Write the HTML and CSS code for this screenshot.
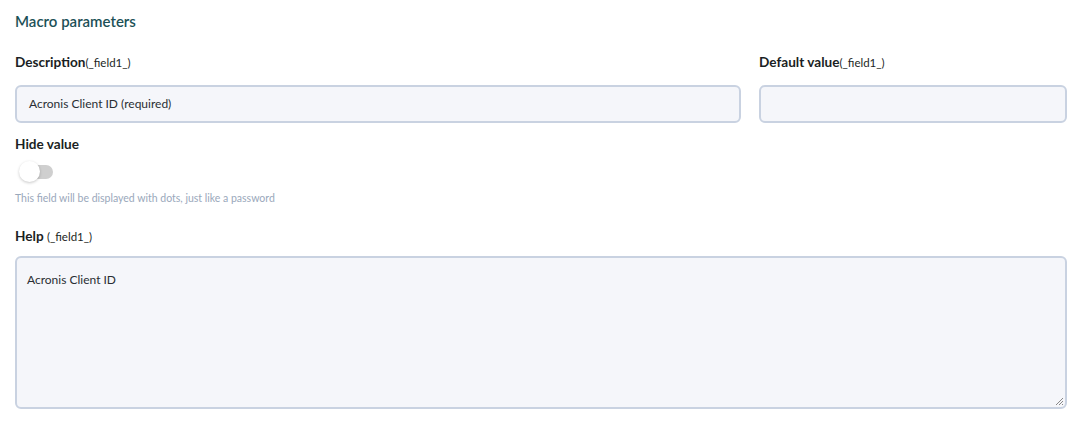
FILE: index.html
```html
<!DOCTYPE html>
<html>
<head>
<meta charset="utf-8">
<link rel="stylesheet" href="styles.css">
</head>
<body>
<div class="page">
  <h2 class="title">Macro parameters</h2>
  <div class="row">
    <div class="field">
      <label class="label">Description<span class="code">(_field1_)</span></label>
      <div class="input">Acronis Client ID (required)</div>
    </div>
    <div class="field">
      <label class="label">Default value<span class="code">(_field1_)</span></label>
      <div class="input"></div>
    </div>
  </div>
  <div class="field hide">
    <label class="label">Hide value</label>
    <div class="switch"><span class="track"></span><span class="knob"></span></div>
    <div class="hint">This field will be displayed with dots, just like a password</div>
  </div>
  <div class="field">
    <label class="label">Help <span class="code">(_field1_)</span></label>
    <div class="textarea">Acronis Client ID
      <svg class="grip" width="10" height="10" viewBox="0 0 10 10"><path d="M9 2 L2 9 M9 5 L5 9 M9 8 L8 9" stroke="#888" stroke-width="1"/></svg>
    </div>
  </div>
</div>
</body>
</html>
```

FILE: styles.css
```css
* { box-sizing: border-box; }
html, body { margin: 0; padding: 0; background: #fff; }
body { font-family: Lato, "Open Sans", sans-serif; color: #1f2328; }
.page { padding: 11px 7px 0 15px; }
.title { margin: 0 0 22px; font-size: 15px; font-weight: 600; color: #1c5157; line-height: 20px; }
.row { display: grid; grid-template-columns: 1fr 308px; gap: 18px; }
.field { display: flex; flex-direction: column; }
.label { font-size: 13.6px; font-weight: 700; color: #1b1f24; line-height: 18px; margin-bottom: 13px; }
.code { font-size: 11.5px; font-weight: 400; }
.input { height: 38px; border: 2px solid #c9d2e1; border-radius: 6px; background: #f5f6fa; padding: 0 12px; font-size: 12px; line-height: 34px; color: #2a2e33; }
.hide { margin-top: 12px; }
.hide .label { margin-bottom: 8px; }
.switch { position: relative; width: 40px; height: 21px; margin-left: 4px; }
.track { position: absolute; left: 6px; top: 4px; width: 28px; height: 14px; border-radius: 7px; background: #cfcfcf; }
.knob { position: absolute; left: 0; top: 0; width: 21px; height: 21px; border-radius: 50%; background: #fff; box-shadow: 0 1px 3px rgba(0,0,0,0.22); }
.hint { font-size: 10.5px; color: #9aa8bb; margin-top: 9px; line-height: 14px; }
.hide + .field { margin-top: 22px; }
.hide + .field .label { margin-bottom: 10px; }
.textarea { position: relative; height: 153px; border: 2px solid #c9d2e1; border-radius: 6px; background: #f5f6fa; padding: 13px 10px 12px; font-size: 12px; line-height: 18px; color: #2a2e33; }
.grip { position: absolute; right: 1px; bottom: 1px; }
```
